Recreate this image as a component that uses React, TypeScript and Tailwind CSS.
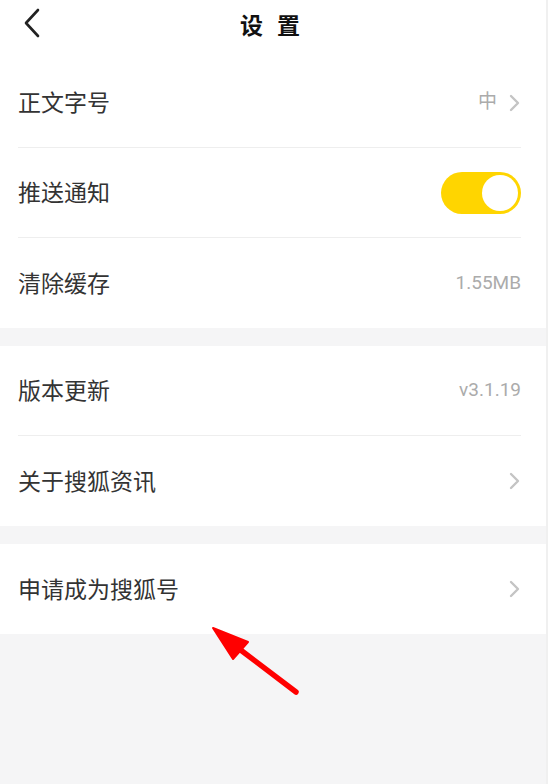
import React from "react";

const font = { fontFamily: '"Noto Sans CJK SC", "Noto Sans", sans-serif' };
const numFont = { fontFamily: 'Roboto, "Noto Sans CJK SC", sans-serif' };

function Chevron() {
  return (
    <svg width="12" height="18" viewBox="0 0 12 18" className="ml-[12px]">
      <polyline points="2,2 9,9 2,16" fill="none" stroke="#c4c4c4" strokeWidth="2.4" strokeLinecap="round" strokeLinejoin="round" />
    </svg>
  );
}

function Toggle() {
  return (
    <div className="flex h-[42px] w-[80px] items-center justify-end rounded-full bg-[#ffd500] pr-[3px]">
      <div className="h-[36px] w-[36px] rounded-full bg-white" />
    </div>
  );
}

function Row({
  label,
  value,
  arrow = false,
  toggle = false,
  last = false,
}: {
  label: string;
  value?: string;
  arrow?: boolean;
  toggle?: boolean;
  last?: boolean;
}) {
  return (
    <div className={`flex h-[90px] items-center justify-between ${last ? "" : "border-b border-[#eeeeee]"}`}>
      <span className="-mt-[2px] text-[23px] text-[#333333]">{label}</span>
      <div className="flex items-center">
        {value && (
          <span className="text-[19px] text-[#ababab]" style={numFont}>
            {value}
          </span>
        )}
        {arrow && <Chevron />}
        {toggle && <Toggle />}
      </div>
    </div>
  );
}

function Section({ children, className = "" }: { children: React.ReactNode; className?: string }) {
  return <div className={`bg-white pl-[18px] pr-[25px] ${className}`}>{children}</div>;
}

export default function App() {
  return (
    <div className="relative min-h-[784px] w-[548px] border-r-2 border-[#f0f0f0] bg-[#f5f5f6]" style={font}>
      <div className="relative flex h-[48px] items-center justify-center bg-white">
        <svg width="20" height="30" viewBox="0 0 20 30" className="absolute left-[22px] top-[8px]">
          <polyline points="16,2 4,15 16,28" fill="none" stroke="#222222" strokeWidth="2.6" strokeLinecap="round" strokeLinejoin="round" />
        </svg>
        <span className="pl-[8px] text-[23px] font-bold tracking-[14px] text-[#111111]">设置</span>
      </div>
      <Section className="pt-[10px]">
        <Row label="正文字号" value="中" arrow />
        <Row label="推送通知" toggle />
        <Row label="清除缓存" value="1.55MB" last />
      </Section>
      <Section className="mt-[18px]">
        <Row label="版本更新" value="v3.1.19" />
        <Row label="关于搜狐资讯" arrow last />
      </Section>
      <Section className="mt-[18px]">
        <Row label="申请成为搜狐号" arrow last />
      </Section>
      <svg className="absolute left-0 top-0" width="548" height="784" viewBox="0 0 548 784">
        <line x1="296" y1="692" x2="238" y2="648" stroke="#ff0000" strokeWidth="5.5" strokeLinecap="round" />
        <polygon points="213,628 248,642 233,659" fill="#ff0000" stroke="#ff0000" strokeWidth="2" strokeLinejoin="round" />
      </svg>
    </div>
  );
}
